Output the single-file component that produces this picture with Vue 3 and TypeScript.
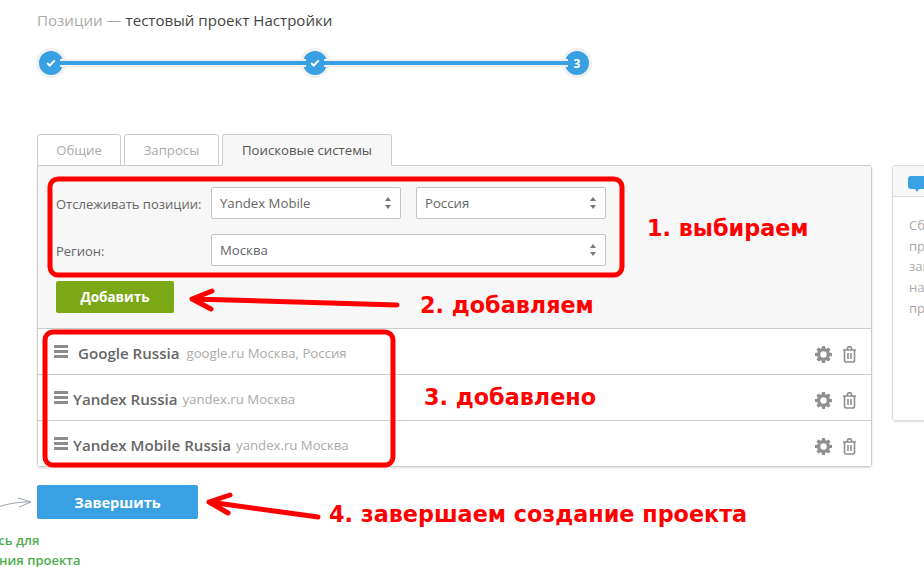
<script setup lang="ts">
interface Row { name: string; domain: string; region: string; indent: boolean }
const rows: Row[] = [
  { name: 'Google Russia', domain: 'google.ru', region: 'Москва, Россия', indent: true },
  { name: 'Yandex Russia', domain: 'yandex.ru', region: 'Москва', indent: false },
  { name: 'Yandex Mobile Russia', domain: 'yandex.ru', region: 'Москва', indent: false },
]
const sideLines = ['Сбор позиций', 'проверка', 'запросов', 'настройка', 'проекта']
</script>

<template>
  <div class="page">
    <main class="main">
      <h1 class="title"><span class="muted">Позиции —</span> тестовый проект Настройки</h1>

      <div class="stepper">
        <span class="dot">
          <svg width="10" height="8" viewBox="0 0 10 8"><path d="M1.2 4l2.5 2.500L8.800 1.400" fill="none" stroke="#fff" stroke-width="2"/></svg>
        </span>
        <span class="line first"></span>
        <span class="dot">
          <svg width="10" height="8" viewBox="0 0 10 8"><path d="M1.2 4l2.5 2.500L8.800 1.400" fill="none" stroke="#fff" stroke-width="2"/></svg>
        </span>
        <span class="line second"></span>
        <span class="dot num">3</span>
      </div>

      <div class="tabs">
        <div class="tab t1">Общие</div>
        <div class="tab t2">Запросы</div>
        <div class="tab t3 active">Поисковые системы</div>
      </div>

      <section class="panel">
        <div class="form">
          <div class="form-row">
            <label class="lbl">Отслеживать позиции:</label>
            <div class="select w190">Yandex Mobile<i class="carets"></i></div>
            <div class="select w190">Россия<i class="carets"></i></div>
          </div>
          <div class="form-row">
            <label class="lbl">Регион:</label>
            <div class="select w395">Москва<i class="carets"></i></div>
          </div>
          <button class="btn add">Добавить</button>
        </div>
        <ul class="list">
          <li v-for="r in rows" :key="r.name" class="row">
            <svg class="handle" width="14" height="13" viewBox="0 0 14 13"><path d="M0 0h14v3H0zM0 5h14v3H0zM0 10h14v3H0z" fill="#8c8c8c"/></svg>
            <span class="name" :class="{ indent: r.indent }">{{ r.name }}</span>
            <span class="meta">{{ r.domain }} {{ r.region }}</span>
            <span class="actions">
              <svg width="17" height="17" viewBox="0 0 16 16"><path fill="#8f8f8f" fill-rule="evenodd" d="M6.7 0h2.6l.4 2.2 1.1.5L12.700 1.400l1.900 1.900-1.300 1.900.5 1.100 2.200.4v2.600l-2.200.4-.5 1.100 1.300 1.900-1.900 1.900-1.900-1.300-1.100.5-.4 2.200H6.700l-.4-2.200-1.100-.5-1.900 1.300-1.900-1.900 1.300-1.900-.5-1.100L0 9.300V6.700l2.200-.4.500-1.100-1.300-1.900 1.900-1.900 1.900 1.300 1.100-.5zM8 5a3 3 0 100 6 3 3 0 000-6z"/></svg>
              <svg width="15" height="17" viewBox="0 0 15 17"><path fill="none" stroke="#8f8f8f" stroke-width="1.600" d="M1 4h13M2.500 4v10.500a1.500 1.500 0 001.500 1.500h7a1.500 1.500 0 001.500-1.500V4M5 4l.8-2.400a1 1 0 011-.7h1.400a1 1 0 011 .7L10 4M6 7v6M9 7v6"/></svg>
            </span>
          </li>
        </ul>
      </section>

      <button class="btn finish">Завершить</button>
    </main>

    <aside class="side">
      <header class="side-head">
        <svg width="18" height="16" viewBox="0 0 18 16"><path fill="#3aa0e4" d="M3 0h12a3 3 0 013 3v7a3 3 0 01-3 3h-4l-2 3-2-3H3a3 3 0 01-3-3V3a3 3 0 013-3z"/></svg>
      </header>
      <div class="side-body">
        <p v-for="l in sideLines" :key="l">{{ l }}</p>
      </div>
    </aside>

    <div class="hint">Щёлкните здесь для<br />завершения создания проекта</div>

    <svg class="marks" width="924" height="567" viewBox="0 0 924 567">
      <g fill="none" stroke="#f00" stroke-width="5" stroke-linecap="round" stroke-linejoin="round">
        <rect x="50" y="179" width="572" height="96" rx="8" />
        <rect x="45" y="332" width="348" height="133" rx="8" />
        <path d="M397 305L192 299M212 291L192 299L211 309" />
        <path d="M318 517L209 502M230 495L209 502L228 513" />
      </g>
      <path d="M-2 507C10 503 20 502 30 502M18 498L31 502L19 507" fill="none" stroke="#98a2ad" stroke-width="1" />
    </svg>

    <span class="note n1">1. выбираем</span>
    <span class="note n2">2. добавляем</span>
    <span class="note n3">3. добавлено</span>
    <span class="note n4">4. завершаем создание проекта</span>
  </div>
</template>

<style>
html, body { margin: 0; background: #fff; overflow: hidden; }
</style>

<style scoped>
.page {
  position: relative;
  width: 924px;
  height: 567px;
  overflow: hidden;
  display: flex;
  gap: 20px;
  padding-left: 37px;
  box-sizing: border-box;
  font-family: "Open Sans", "Liberation Sans", sans-serif;
  color: #555;
  background: #fff;
}
.main { width: 835px; flex-shrink: 0; }
.title {
  margin: 11px 0 0;
  font-size: 15.100px;
  line-height: 18px;
  font-weight: 400;
  color: #444;
}
.muted { color: #aaa; }
.stepper { display: flex; align-items: center; margin: 22px 0 0 2px; height: 24px; }
.dot {
  width: 24px;
  height: 24px;
  border-radius: 50%;
  background: #3aa0e4;
  box-shadow: 0 0 0 3px #f0f0f0;
  display: flex;
  align-items: center;
  justify-content: center;
  flex-shrink: 0;
}
.num { color: #fff; font-size: 12px; font-weight: 700; }
.line {
  height: 4px;
  margin: -1px -3px 0;
  background: #3aa0e4;
  box-shadow: 0 2px 0 #f0f0f0, 0 -2px 0 #f0f0f0;
  position: relative;
  z-index: 1;
}
.first { width: 246px; }
.second { width: 244px; }
.tabs { display: flex; margin-top: 59px; height: 31px; gap: 3px; }
.tab {
  box-sizing: border-box;
  height: 32px;
  border: 1px solid #ccc;
  border-radius: 3px 3px 0 0;
  background: #fff;
  color: #aaa;
  font-size: 13.200px;
  line-height: 31px;
  text-align: center;
  position: relative;
}
.t1 { width: 84px; }
.t2 { width: 95px; }
.t3 { width: 170px; }
.active { background: #f7f7f7; color: #555; border-bottom-color: #f7f7f7; z-index: 1; }
.panel {
  box-sizing: border-box;
  height: 302px;
  border: 1px solid #ccc;
  border-radius: 0 3px 3px 3px;
  box-shadow: 0 1px 2px rgba(0, 0, 0, 0.15);
}
.form {
  box-sizing: border-box;
  height: 163px;
  background: #f7f7f7;
  padding: 21px 18px 0;
  border-bottom: 1px solid #ccc;
}
.form-row { display: flex; align-items: center; gap: 15px; margin-bottom: 15px; height: 32px; }
.lbl { width: 155px; margin: 2px -15px 0 0; font-size: 13px; color: #666; }
.select {
  box-sizing: border-box;
  height: 32px;
  background: #fff;
  border: 1px solid #c4c4c4;
  border-radius: 2px;
  font-size: 13.200px;
  line-height: 30px;
  padding-left: 8px;
  color: #666;
  position: relative;
}
.w190 { width: 190px; }
.w395 { width: 395px; }
.carets {
  position: absolute;
  right: 9px;
  top: 9px;
  width: 0;
  height: 0;
  border-left: 3.500px solid transparent;
  border-right: 3.500px solid transparent;
  border-bottom: 4px solid #777;
}
.carets::after {
  content: "";
  position: absolute;
  left: -3.500px;
  top: 8px;
  border-left: 3.500px solid transparent;
  border-right: 3.500px solid transparent;
  border-top: 4px solid #777;
}
.btn {
  display: block;
  border: 0;
  border-radius: 2px;
  color: #fff;
  font-family: inherit;
  font-weight: 700;
  font-size: 13.500px;
  padding: 0;
}
.add { width: 118px; height: 32px; background: #7aa816; }
.list { list-style: none; margin: 0; padding: 0; }
.row {
  box-sizing: border-box;
  height: 46px;
  display: flex;
  align-items: center;
  padding: 2px 14px 0 16px;
  border-bottom: 1px solid #ccc;
  background: #fff;
}
.row:last-child { height: 45px; border-bottom: 0; }
.handle { flex-shrink: 0; margin-top: -2px; }
.name { margin-left: 5px; font-size: 15.100px; font-weight: 600; color: #666; }
.name.indent { margin-left: 10px; }
.meta { margin-left: 5px; margin-top: 1px; font-size: 13.200px; color: #aaa; }
.indent + .meta { margin-left: 7px; }
.actions { margin: 3px 0 0 auto; display: flex; align-items: center; gap: 10px; }
.finish { width: 161px; height: 34px; background: #3aa0e4; margin-top: 18px; font-size: 14.500px; }
.side {
  box-sizing: border-box;
  width: 300px;
  height: 256px;
  margin-top: 165px;
  flex-shrink: 0;
  border: 1px solid #ddd;
  border-radius: 3px;
  box-shadow: 0 1px 2px rgba(0, 0, 0, 0.12);
}
.side-head { height: 31px; background: #f7f7f7; border-bottom: 1px solid #ddd; padding: 9px 0 0 15px; box-sizing: border-box; }
.side-body { padding: 18px 0 0 16px; font-size: 13px; line-height: 20.700px; color: #aaa; }
.side-body p { margin: 0; }
.hint {
  position: absolute;
  left: -123px;
  top: 530px;
  width: 190px;
  text-align: center;
  white-space: nowrap;
  color: #4cae4c;
  font-size: 13px;
  font-weight: 600;
  line-height: 20px;
}
.marks { position: absolute; left: 0; top: 0; pointer-events: none; overflow: visible; }
.note {
  position: absolute;
  font-family: "DejaVu Sans", sans-serif;
  font-weight: 700;
  font-size: 22.300px;
  line-height: 28px;
  color: #f00;
  white-space: nowrap;
}
.n1 { left: 647px; top: 214px; }
.n2 { left: 420px; top: 291px; }
.n3 { left: 424px; top: 383px; }
.n4 { left: 329px; top: 500px; }
</style>
